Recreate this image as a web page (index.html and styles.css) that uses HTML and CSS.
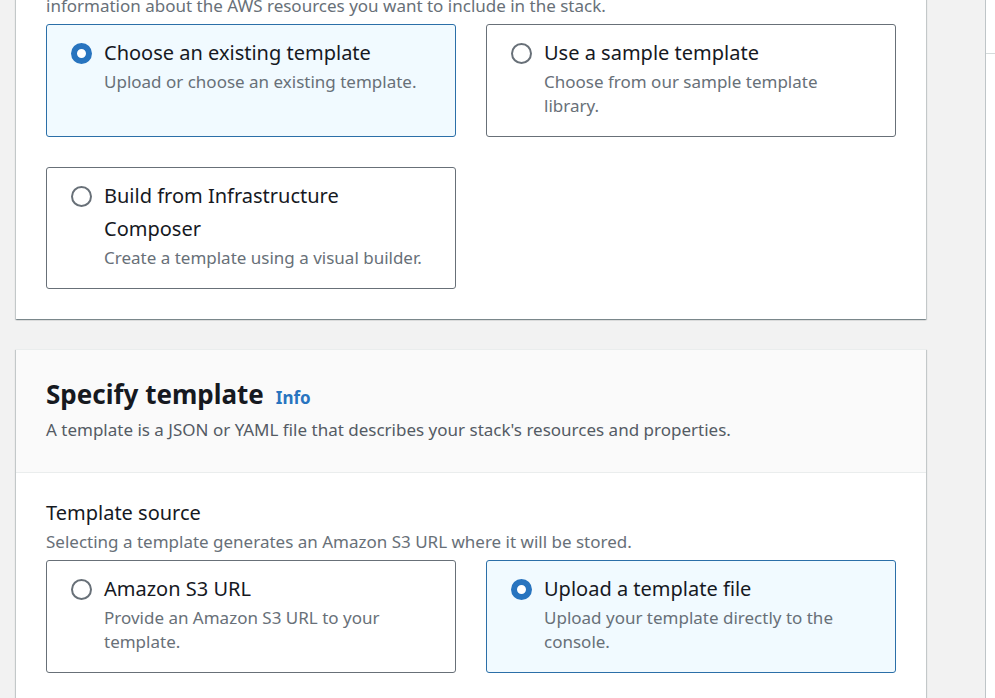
FILE: index.html
```html
<!DOCTYPE html>
<html lang="en">
<head>
<meta charset="utf-8">
<title>Create stack</title>
<link rel="stylesheet" href="styles.css">
</head>
<body>
<div class="layout">
  <main class="content">
    <section class="card">
      <div class="card-body card-body-continued">
        <p class="hint" id="prepare-hint">information about the AWS resources you want to include in the stack.</p>
        <div class="tiles" role="radiogroup" aria-labelledby="prepare-hint">
          <label class="tile">
            <input class="radio" type="radio" name="prepare" checked>
            <span class="tile-text"><span class="label">Choose an existing template</span><span class="hint">Upload or choose an existing template.</span></span>
          </label>
          <label class="tile">
            <input class="radio" type="radio" name="prepare">
            <span class="tile-text"><span class="label">Use a sample template</span><span class="hint">Choose from our sample template library.</span></span>
          </label>
          <label class="tile">
            <input class="radio" type="radio" name="prepare">
            <span class="tile-text"><span class="label">Build from Infrastructure Composer</span><span class="hint">Create a template using a visual builder.</span></span>
          </label>
        </div>
      </div>
    </section>
    <section class="card">
      <header class="card-header">
        <div class="heading"><h2>Specify template</h2><a class="info" href="#">Info</a></div>
        <p class="hint description">A template is a JSON or YAML file that describes your stack's resources and properties.</p>
      </header>
      <div class="card-body">
        <p class="label" id="source-label">Template source</p>
        <p class="hint">Selecting a template generates an Amazon S3 URL where it will be stored.</p>
        <div class="tiles" role="radiogroup" aria-labelledby="source-label">
          <label class="tile">
            <input class="radio" type="radio" name="source">
            <span class="tile-text"><span class="label">Amazon S3 URL</span><span class="hint">Provide an Amazon S3 URL to your template.</span></span>
          </label>
          <label class="tile">
            <input class="radio" type="radio" name="source" checked>
            <span class="tile-text"><span class="label">Upload a template file</span><span class="hint">Upload your template directly to the console.</span></span>
          </label>
        </div>
      </div>
    </section>
  </main>
  <aside class="panel"><div class="panel-header"></div></aside>
</div>
</body>
</html>
```
FILE: styles.css
```css
* { box-sizing: border-box; }
body {
  margin: 0;
  height: 100vh;
  overflow: hidden;
  background: #f2f2f2;
  color: #16191f;
  font-family: "Noto Sans", "Open Sans", sans-serif;
}
h2, p { margin: 0; }
.layout { display: flex; height: 100%; }
.content {
  flex: 1;
  display: flex;
  flex-direction: column;
  gap: 30px;
  margin-top: -6px;
  padding: 0 59px 0 16px;
}
.card {
  flex-shrink: 0;
  background: #fff;
  border-top: 1px solid #eaeded;
  box-shadow: 0 1px 1px 0 rgba(0, 28, 36, 0.3), 1px 1px 1px 0 rgba(0, 28, 36, 0.15), -1px 1px 1px 0 rgba(0, 28, 36, 0.15);
}
.card:first-child { border-top: 0; }
.card-header {
  padding: 24px 30px 30px;
  background: #fafafa;
  border-bottom: 1px solid #eaeded;
}
.heading { display: flex; align-items: baseline; gap: 12px; margin-bottom: 4px; }
.heading h2 { font-size: 26px; line-height: 40px; font-weight: 700; }
.info { color: #2874bf; font-size: 17px; font-weight: 700; line-height: 24px; text-decoration: none; }
.card-body { padding: 23px 30px 30px; }
.card-body-continued { padding-top: 0; }
.label { display: block; margin-bottom: 1px; font-size: 20px; line-height: 33px; }
.hint { display: block; font-size: 17px; line-height: 24px; color: #687078; }
.description { color: #545b64; }
.tiles {
  display: grid;
  grid-template-columns: 1fr 1fr;
  gap: 30px;
  margin-top: 6px;
}
.tile {
  display: flex;
  gap: 12px;
  padding: 11px 24px 18px;
  border: 1px solid #687078;
  border-radius: 3px;
}
.tile:has(:checked) { background: #f1faff; border-color: #2b6fa8; }
.radio {
  appearance: none;
  flex: none;
  width: 21px;
  height: 21px;
  margin: 7px 0;
  border: 2px solid #687078;
  border-radius: 50%;
  background: #fff;
}
.radio:checked { border: 6px solid #2874bf; }
.panel { width: 10px; background: #fff; border-left: 1px solid #bfc5c8; }
.panel-header { height: 54px; border-bottom: 1px solid #d5dbdb; }
```
